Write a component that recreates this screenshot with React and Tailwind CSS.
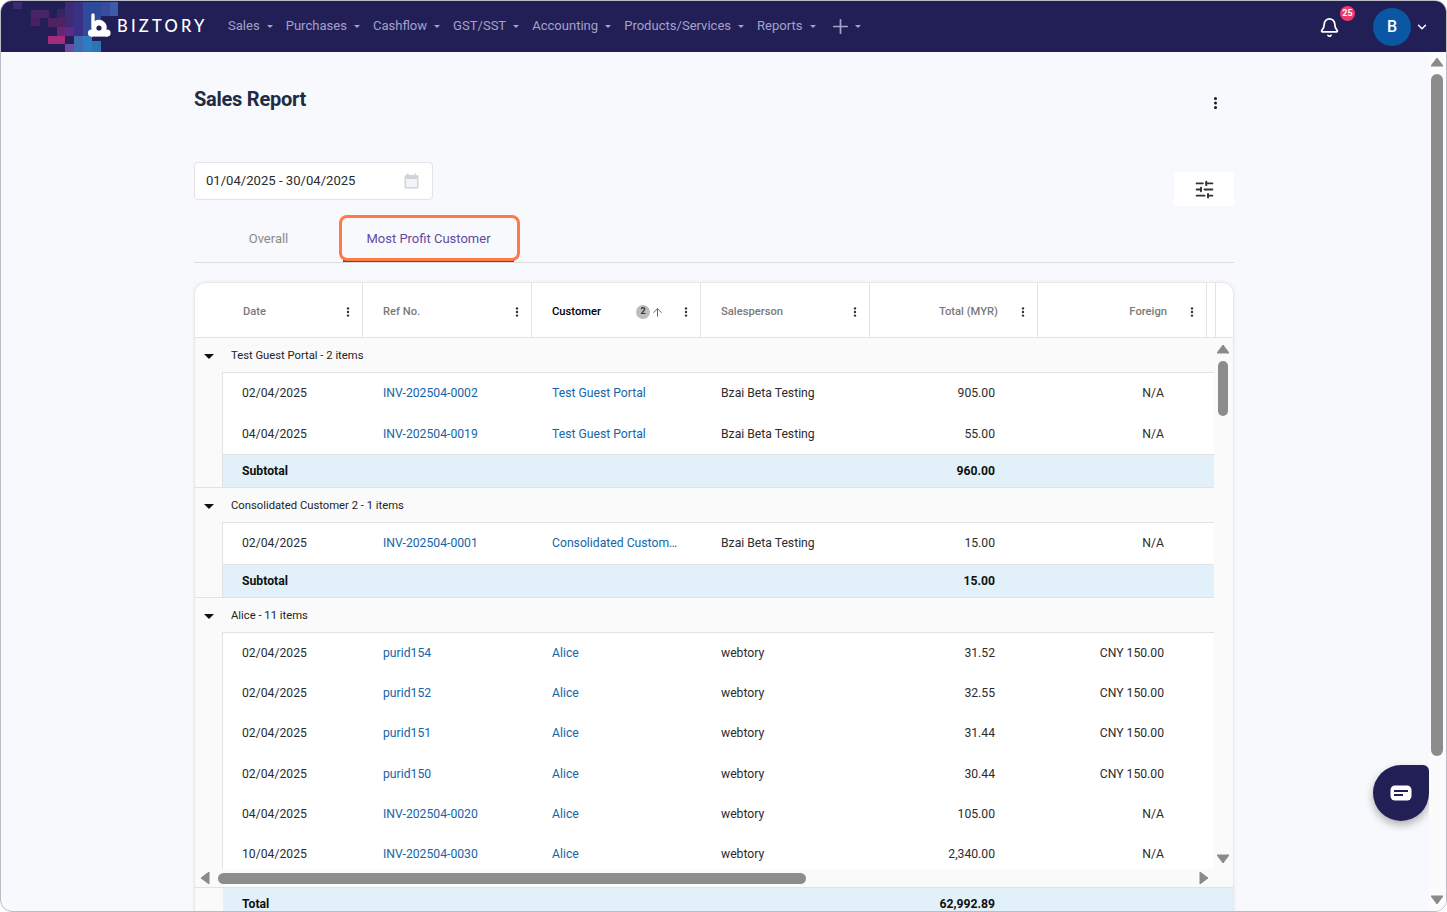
import { ChevronDown, Plus, Bell, ArrowUp, SlidersHorizontal } from 'lucide-react';

const navItems = ['Sales', 'Purchases', 'Cashflow', 'GST/SST', 'Accounting', 'Products/Services', 'Reports'];

const mosaic = [
  [12, 1, 9, 7, '#3a2a6e'], [30, 9, 18, 8, '#4a2468'], [30, 17, 9, 8, '#4b2060'],
  [47, 17, 17, 9, '#502264'], [56, 26, 8, 9, '#6a2376'], [47, 35, 17, 8, '#a32a7c'], [64, 1, 9, 34, '#3d2b78'],
  [64, 26, 9, 9, '#5a2c8a'], [73, 1, 9, 34, '#3a3186'], [64, 35, 9, 8, '#221f57'], [64, 43, 9, 8, '#6e4aa2'],
  [73, 35, 9, 16, '#3a6eb0'], [82, 1, 9, 50, '#2f4a98'], [82, 35, 9, 16, '#2f7cc0'], [91, 1, 9, 24, '#2e4a9a'],
  [91, 40, 9, 11, '#2c74b4'], [100, 1, 9, 14, '#3a4a9e'], [109, 1, 8, 14, '#3e5aa8'], [56, 8, 8, 9, '#372560'],
];

const columns = [
  { label: 'Date', w: 'w-[168px]', pad: 'pl-[48px]' },
  { label: 'Ref No.', w: 'w-[169px]', pad: 'pl-[20px]' },
  { label: 'Customer', w: 'w-[169px]', pad: 'pl-[20px]', active: true },
  { label: 'Salesperson', w: 'w-[169px]', pad: 'pl-[20px]' },
  { label: 'Total (MYR)', w: 'w-[168px]', pad: 'pl-[20px]', right: true },
  { label: 'Foreign', w: 'w-[169px]', pad: 'pl-[20px]', right: true },
];

const groups = [
  {
    title: 'Test Guest Portal - 2 items',
    rowH: 'h-[40.5px]',
    rows: [
      ['02/04/2025', 'INV-202504-0002', 'Test Guest Portal', 'Bzai Beta Testing', '905.00', 'N/A'],
      ['04/04/2025', 'INV-202504-0019', 'Test Guest Portal', 'Bzai Beta Testing', '55.00', 'N/A'],
    ],
    subtotal: '960.00',
  },
  {
    title: 'Consolidated Customer 2 - 1 items',
    rowH: 'h-[41px]',
    rows: [['02/04/2025', 'INV-202504-0001', 'Consolidated Customer 2', 'Bzai Beta Testing', '15.00', 'N/A']],
    subtotal: '15.00',
  },
  {
    title: 'Alice - 11 items',
    rowH: 'h-[40.2px]',
    rows: [
      ['02/04/2025', 'purid154', 'Alice', 'webtory', '31.52', 'CNY 150.00'],
      ['02/04/2025', 'purid152', 'Alice', 'webtory', '32.55', 'CNY 150.00'],
      ['02/04/2025', 'purid151', 'Alice', 'webtory', '31.44', 'CNY 150.00'],
      ['02/04/2025', 'purid150', 'Alice', 'webtory', '30.44', 'CNY 150.00'],
      ['04/04/2025', 'INV-202504-0020', 'Alice', 'webtory', '105.00', 'N/A'],
      ['10/04/2025', 'INV-202504-0030', 'Alice', 'webtory', '2,340.00', 'N/A'],
    ],
  },
];

function Dots({ className = 'text-[#333]', large }) {
  return (
    <svg width={large ? 5 : 4} height={large ? 14 : 10} viewBox="0 0 4 10" className={className}>
      <circle cx="2" cy="1.4" r="1.2" fill="currentColor" />
      <circle cx="2" cy="5" r="1.2" fill="currentColor" />
      <circle cx="2" cy="8.6" r="1.2" fill="currentColor" />
    </svg>
  );
}

function Arrow({ dir, className }) {
  const points = { up: '6,1 12,9 0,9', down: '0,1 12,1 6,9', left: '9,0 9,12 1,6', right: '1,0 1,12 9,6' };
  return (
    <svg width="12" height="12" viewBox="0 0 12 12" className={className}>
      <polygon points={points[dir]} fill="#8a8a8a" stroke="#8a8a8a" strokeLinejoin="round" />
    </svg>
  );
}

function Caret() {
  return <span className="mt-[2px] h-0 w-0 border-x-[3px] border-t-[3px] border-x-transparent border-t-[#a3a3c9]" />;
}

function Header() {
  return (
    <header className="relative flex h-[51px] shrink-0 items-center bg-[#221f57] text-[13.05px]">
      <svg className="absolute left-0 top-0" width="120" height="51">
        {mosaic.map(([x, y, w, h, fill], i) => (
          <rect key={i} x={x} y={y} width={w} height={h} fill={fill} />
        ))}
      </svg>
      <div className="relative ml-[86px] flex w-[141px] items-center">
        <svg width="26" height="26" viewBox="0 0 26 26" className="mt-[-2px]">
          <path d="M6 2v12.5a6 6 0 1 0 1-3.4" fill="none" stroke="#fff" strokeWidth="3.4" strokeLinecap="round" />
          <circle cx="12" cy="15" r="6.5" fill="#fff" />
          <circle cx="12" cy="15" r="2.6" fill="#221f57" />
          <circle cx="4.5" cy="20" r="3.6" fill="#fff" />
          <circle cx="20" cy="20" r="3.6" fill="#fff" />
          <rect x="4" y="20" width="17" height="3.6" fill="#fff" />
        </svg>
        <span className="ml-[4px] font-['Lato',sans-serif] text-[16.5px] font-medium tracking-[3.2px] text-white">BIZTORY</span>
      </div>
      <nav className="relative mt-[-2px] flex items-center gap-[13px] text-[#a3a3c9]">
        {navItems.map((item) => (
          <span key={item} className="flex items-center gap-[7px]">
            {item}
            <Caret />
          </span>
        ))}
        <span className="flex items-center gap-[3px]">
          <Plus className="mt-[1px] h-[23px] w-[23px]" strokeWidth={1.8} />
          <Caret />
        </span>
      </nav>
      <div className="relative ml-auto mr-[17px] flex items-center">
        <span className="relative mr-[33px]">
          <Bell className="mt-[2px] h-[21px] w-[21px] text-white" strokeWidth={2} />
          <span className="absolute left-[21px] top-[-9px] flex h-[15px] w-[15px] items-center justify-center rounded-full bg-[#ec3a6b] text-[9px] font-bold text-white">25</span>
        </span>
        <span className="flex h-[38px] w-[38px] items-center justify-center rounded-full bg-[#0a57a4] text-[16px] font-medium text-white">B</span>
        <ChevronDown className="ml-[4px] h-[14px] w-[14px] text-white" strokeWidth={2.5} />
      </div>
    </header>
  );
}

function TableHead() {
  return (
    <div className="flex h-[55px] shrink-0 border-b border-[#e2e2e2] text-[11.2px] font-medium text-[#7a7a7a]">
      {columns.map((col) => (
        <div key={col.label} className={`flex items-center border-r border-[#e2e2e2] pt-[4px] ${col.w} ${col.pad}`}>
          <span className={`${col.right ? 'ml-auto' : ''} ${col.active ? 'font-medium text-black' : ''}`}>{col.label}</span>
          {col.active && (
            <span className="ml-auto flex items-center">
              <span className="flex h-[14px] w-[14px] items-center justify-center rounded-full bg-[#bdbdbd] text-[9px] font-bold text-[#333]">2</span>
              <ArrowUp className="ml-[1px] h-[13px] w-[13px] text-[#666]" strokeWidth={1.8} />
            </span>
          )}
          <span className={`${col.right ? 'ml-[23px]' : col.active ? 'ml-[20px]' : 'ml-auto'} mr-[12px]`}>
            <Dots />
          </span>
        </div>
      ))}
      <div className="w-[9px] border-r border-[#e2e2e2]" />
    </div>
  );
}

function Cell({ className, children }) {
  return <div className={`flex items-center ${className}`}>{children}</div>;
}

function DataRow({ row, rowH }) {
  return (
    <div className={`flex text-[12.2px] text-[#2c2c2c] ${rowH}`}>
      <Cell className="w-[140px] pl-[19px]">{row[0]}</Cell>
      <Cell className="w-[169px] pl-[20px] text-[#1565a8]">{row[1]}</Cell>
      <Cell className="w-[169px] pl-[20px] text-[#1565a8]">
        <span className="w-[126px] truncate">{row[2]}</span>
      </Cell>
      <Cell className="w-[169px] pl-[20px]">{row[3]}</Cell>
      <Cell className="w-[168px] justify-end pr-[43px]">{row[4]}</Cell>
      <Cell className="w-[169px] justify-end pr-[43px]">{row[5]}</Cell>
    </div>
  );
}

function Group({ group }) {
  return (
    <div className="border-b border-[#e2e2e2]">
      <div className="flex h-[34px] items-center bg-[#fafafa] pt-[2px] text-[11.25px] text-[#222]">
        <span className="ml-[9px] h-0 w-0 border-x-[5px] border-t-[5px] border-x-transparent border-t-[#111]" />
        <span className="ml-[17px]">{group.title}</span>
      </div>
      <div className="flex">
        <div className="w-[28px] shrink-0 border-r border-[#e2e2e2] bg-[#fafafa]" />
        <div className="flex-1 border-t border-[#e2e2e2]">
          {group.rows.map((row) => (
            <DataRow key={row[1]} row={row} rowH={group.rowH} />
          ))}
          {group.subtotal && (
            <div className="flex h-[33px] border-t border-[#e2e2e2] bg-[#e2f1f9] text-[12.2px] font-bold text-[#111]">
              <Cell className="w-[140px] pl-[19px]">Subtotal</Cell>
              <Cell className="w-[675px] justify-end pr-[43px]">{group.subtotal}</Cell>
            </div>
          )}
        </div>
      </div>
    </div>
  );
}

function ReportTable() {
  return (
    <div className="flex h-[640px] w-[1040px] flex-col overflow-hidden rounded-t-[12px] border border-b-0 border-[#e8e8e8] bg-white shadow-[0_0_4px_rgba(0,0,0,0.06)]">
      <TableHead />
      <div className="flex h-[531px] shrink-0">
        <div className="h-full w-[1019px] overflow-hidden">
          {groups.map((group) => (
            <Group key={group.title} group={group} />
          ))}
        </div>
        <div className="flex w-[19px] flex-col items-center bg-[#fafafa] pr-[2px] pt-[6px]">
          <Arrow dir="up" />
          <span className="mt-[5px] h-[55px] w-[10px] rounded-full bg-[#8c8c8c]" />
          <Arrow dir="down" className="mb-[3px] mt-auto" />
        </div>
      </div>
      <div className="flex h-[19px] shrink-0 items-center border-b border-[#e2e2e2] bg-[#fafafa] pl-[5px]">
        <Arrow dir="left" />
        <span className="ml-[6px] h-[11px] w-[588px] rounded-full bg-[#8c8c8c]" />
        <Arrow dir="right" className="ml-[393px]" />
      </div>
      <div className="flex flex-1 text-[12.2px] font-bold text-[#111]">
        <div className="w-[28px] shrink-0 bg-[#fafafa]" />
        <div className="flex h-[33px] flex-1 bg-[#e2f1f9]">
          <Cell className="w-[140px] pl-[19px]">Total</Cell>
          <Cell className="w-[675px] justify-end pr-[43px]">62,992.89</Cell>
        </div>
      </div>
    </div>
  );
}

export default function App() {
  return (
    <div className="flex h-screen w-full flex-col overflow-hidden rounded-[12px] border border-[#bbbcc4] bg-[#f8f9fd] font-['Roboto',sans-serif]">
      <Header />
      <div className="flex min-h-0 flex-1">
        <main className="relative flex-1 overflow-hidden pl-[193px]">
          <div className="flex w-[1040px] items-start justify-between pt-[35px]">
            <h1 className="text-[20px] font-bold leading-[24px] tracking-[-0.25px] text-[#1f2a44]">Sales Report</h1>
            <span className="mr-[16px] mt-[9px]"><Dots large className="text-[#1a1a2e]" /></span>
          </div>
          <div className="mt-[51px] flex w-[1040px] items-start justify-between">
            <div className="flex h-[38px] w-[239px] items-center rounded-[4px] border border-[#e2e3e8] bg-white pl-[11px] pr-[13px] text-[13.1px] text-[#2b2b2b]">
              <span>01/04/2025 - 30/04/2025</span>
              <svg className="ml-auto" width="15" height="16" viewBox="0 0 15 16">
                <rect x="0.5" y="2" width="14" height="13.5" rx="1.5" fill="#cfd3da" />
                <rect x="2" y="6" width="11" height="8" fill="#f3f4f7" />
                <rect x="3" y="0.5" width="1.6" height="3" fill="#cfd3da" />
                <rect x="10.4" y="0.5" width="1.6" height="3" fill="#cfd3da" />
              </svg>
            </div>
            <div className="mt-[10px] flex h-[34px] w-[60px] items-center justify-center rounded-[2px] bg-white">
              <SlidersHorizontal className="h-[21px] w-[21px] text-[#333]" strokeWidth={2.2} />
            </div>
          </div>
          <div className="relative mt-[9px] flex h-[48px] w-[1040px] border-b border-[#dcdde2] text-[13px]">
            <span className="flex w-[149px] items-center justify-center text-[#8a8a8a]">Overall</span>
            <span className="relative flex w-[171px] items-center justify-center border-b-2 border-[#5b3aa0] pt-[2px] text-[#5f4a9e]">
              Most Profit Customer
              <span className="absolute left-[-4px] right-[-6px] top-0 h-[46px] rounded-[8px] border-[3px] border-[#ff7a45]" />
            </span>
          </div>
          <div className="mt-[19px]">
            <ReportTable />
          </div>
          <button className="absolute right-0 top-[713px] flex h-[56px] w-[56px] items-center justify-center rounded-[28px] rounded-tr-[6px] bg-[#221f57] shadow-[0_4px_8px_rgba(0,0,0,0.3)]">
            <svg width="22" height="16" viewBox="0 0 22 16">
              <rect x="0.5" y="0.5" width="21" height="15" rx="4.5" fill="#fff" />
              <rect x="4" y="5" width="14" height="2" fill="#221f57" />
              <rect x="4" y="9" width="9" height="2" fill="#221f57" />
            </svg>
          </button>
        </main>
        <div className="flex w-[17px] shrink-0 flex-col items-center bg-[#fbfbfb] pr-[1px] pt-[5px]">
          <Arrow dir="up" />
          <span className="mt-[5px] h-[682px] w-[12px] rounded-full bg-[#8c8c8c]" />
          <Arrow dir="down" className="mb-[4px] mt-auto" />
        </div>
      </div>
    </div>
  );
}
